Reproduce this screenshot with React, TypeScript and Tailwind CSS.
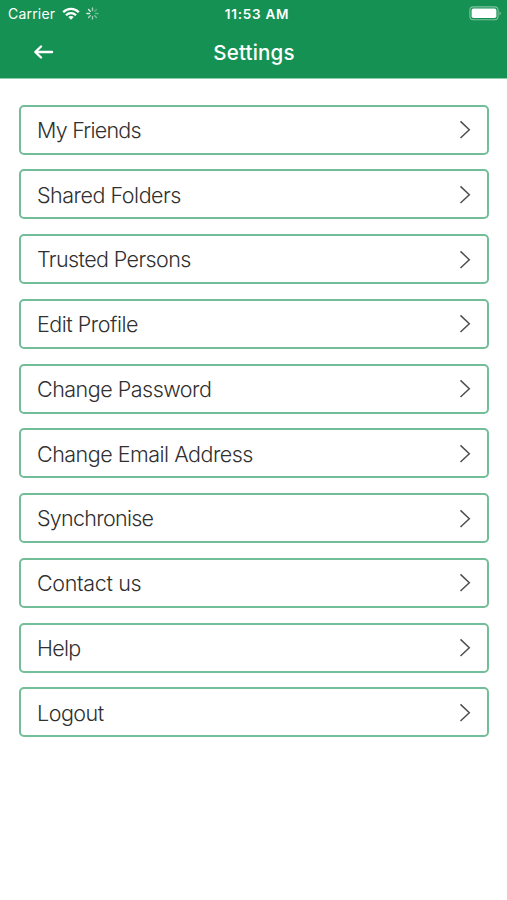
import React from "react";

interface SettingsItem {
  label: string;
  tracking: string;
}

const items: SettingsItem[] = [
  { label: "My Friends", tracking: "tracking-[-0.76px]" },
  { label: "Shared Folders", tracking: "tracking-[-0.48px]" },
  { label: "Trusted Persons", tracking: "tracking-[-0.6px]" },
  { label: "Edit Profile", tracking: "tracking-[-0.48px]" },
  { label: "Change Password", tracking: "tracking-[-0.5px]" },
  { label: "Change Email Address", tracking: "tracking-[-0.5px]" },
  { label: "Synchronise", tracking: "tracking-[-0.72px]" },
  { label: "Contact us", tracking: "tracking-[-0.34px]" },
  { label: "Help", tracking: "tracking-[-0.7px]" },
  { label: "Logout", tracking: "tracking-[-0.5px]" },
];

// Spinner spokes fade out clockwise
const spokes = [0.6, 0.3, 0.35, 0.45, 0.55, 0.65, 0.85, 0.85];

function WifiIcon() {
  return (
    <svg width="18" height="14" viewBox="0 0 18 14" fill="none" stroke="#fff" strokeWidth="2.3">
      <path d="M1.2 5.2C5.5.8 12.5.8 16.8 5.2" />
      <path d="M4 8.2c2.8-2.8 7.2-2.8 10 0" />
      <path d="M9 12.8 6.3 10.1c1.5-1.4 3.9-1.4 5.4 0z" fill="#fff" stroke="none" />
    </svg>
  );
}

function Spinner() {
  return (
    <svg width="13" height="13" viewBox="0 0 13 13" stroke="#fff" strokeWidth="1.4" strokeLinecap="round">
      {spokes.map((opacity, i) => (
        <path key={i} d="M6.5.9v2.6" opacity={opacity} transform={`rotate(${i * 45} 6.5 6.5)`} />
      ))}
    </svg>
  );
}

function BatteryIcon() {
  return (
    <svg width="33" height="15" viewBox="0 0 33 15" fill="none">
      <rect x="0.9" y="0.9" width="28.2" height="12.8" rx="3.4" stroke="#fff" strokeOpacity="0.45" strokeWidth="1.1" />
      <rect x="2.6" y="2.6" width="24.8" height="9.4" rx="1.8" fill="#fff" />
      <path d="M30.5 5.2c1.6.8 1.6 3.4 0 4.2z" fill="#fff" fillOpacity="0.5" />
    </svg>
  );
}

function StatusBar() {
  return (
    <div className="grid h-[27px] grid-cols-[1fr_auto_1fr] items-center pl-2 pr-[5px]">
      <div className="flex items-center">
        <span className="w-[54px] whitespace-nowrap text-[14px] tracking-[0.2px]">Carrier</span>
        <WifiIcon />
        <span className="ml-[6px]">
          <Spinner />
        </span>
      </div>
      <span className="pl-[4px] pt-px text-[13.5px] font-semibold tracking-[0.75px]">11:53 AM</span>
      <div className="flex justify-end">
        <BatteryIcon />
      </div>
    </div>
  );
}

export default function App() {
  return (
    <div className="min-h-[900px] w-[507px] bg-white font-['Inter','Liberation_Sans',sans-serif]">
      <header className="h-[79px] border-b border-[#8bcda9] bg-[#169154] text-white">
        <StatusBar />
        <div className="grid h-[50px] grid-cols-[1fr_auto_1fr] items-center">
          <button aria-label="Back" className="ml-[33px] w-[22px]">
            <svg
              width="22"
              height="16"
              viewBox="0 0 22 16"
              fill="none"
              stroke="#fff"
              strokeWidth="2.4"
              strokeLinecap="round"
              strokeLinejoin="round"
            >
              <path d="M19 8H2.5M8 2.5 2.3 8 8 13.5" />
            </svg>
          </button>
          <h1 className="pl-px pt-[2px] text-[20.5px] font-medium tracking-[0.2px]">Settings</h1>
        </div>
      </header>

      {/* Menu */}
      <nav className="flex flex-col gap-[14.75px] pl-[19px] pr-[18px] pt-[25.6px]">
        {items.map((item) => (
          <button
            key={item.label}
            className="flex h-[50px] items-center justify-between rounded-[5px] border-2 border-[#73bd99] bg-white pl-[16px] pr-[16px] text-left"
          >
            <span className={`pt-[0.5px] text-[21.5px] font-light leading-[28px] text-[#303030] ${item.tracking}`}>
              {item.label}
            </span>
            <svg width="12" height="19" viewBox="0 0 12 19" fill="none" stroke="#505050" strokeWidth="1.5">
              <path d="M1.5 1.4 10.3 9.7 1.5 18" />
            </svg>
          </button>
        ))}
      </nav>
    </div>
  );
}
